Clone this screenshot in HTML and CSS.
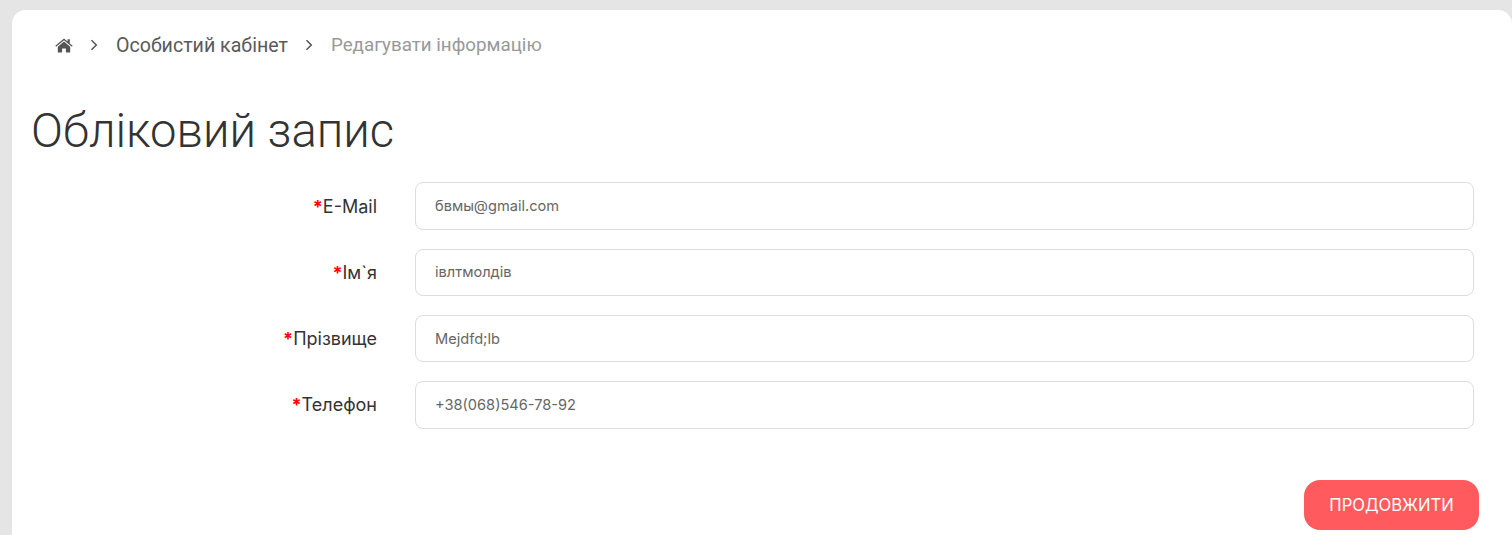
FILE: index.html
```html
<!DOCTYPE html>
<html>
<head>
	<meta charset=utf-8>
	<title>Обліковий запис</title>
	<link rel="stylesheet" href="styles.css">
</head>
<body>
<main class=card>
	<nav class=breadcrumb>
		<a class=home>
			<svg width=18 height=15 viewBox="0 0 18 15"><path fill="#555" d="M9 .6 .3 7.8l.8 1L9 2.3l7.9 6.5.8-1-2.9-2.4V1.2h-2.2v2.4zM9 3.6 2.8 8.7V14c0 .4.3.6.6.6h3.7v-4h3.8v4h3.7c.3 0 .6-.2.6-.6V8.7z"/></svg>
		</a>
		<svg class=sep width=8 height=12 viewBox="0 0 8 12"><path fill=none stroke="#555" stroke-width=1.5 d="M1.5 1.2 6.3 6l-4.8 4.8"/></svg>
		<a class=parent>Особистий кабінет</a>
		<svg class=sep width=8 height=12 viewBox="0 0 8 12"><path fill=none stroke="#555" stroke-width=1.5 d="M1.5 1.2 6.3 6l-4.8 4.8"/></svg>
		<a class=current>Редагувати інформацію</a>
	</nav>
	<h1>Обліковий запис</h1>
	<form class=fields onsubmit="return false;">
		<label class=row>
			<span class=name><b>*</b>E-Mail</span>
			<input value="бвмы@gmail.com">
		</label>
		<label class=row>
			<span class=name><b>*</b>Ім`я</span>
			<input value="івлтмолдів">
		</label>
		<label class=row>
			<span class=name><b>*</b>Прізвище</span>
			<input value="Mejdfd;lb">
		</label>
		<label class=row>
			<span class=name><b>*</b>Телефон</span>
			<input value="+38(068)546-78-92">
		</label>
		<div class=actions>
			<button type=submit>ПРОДОВЖИТИ</button>
		</div>
	</form>
</main>
</body>
</html>
```

FILE: styles.css
```css
* {
	margin: 0;
	padding: 0;
	box-sizing: border-box;
}
html, body {
	height: 535px;
	overflow: hidden;
}
body {
	background: #e5e5e5;
	padding: 10px 0 0 12px;
	font-family: Inter, "Noto Sans", sans-serif;
	color: #333;
}
.card {
	height: 525px;
	background: #fff;
	border-radius: 14px 14px 0 0;
	padding: 0 38px 0 19px;
}
.breadcrumb {
	display: flex;
	align-items: center;
	height: 70px;
	padding: 0 0 0 24px;
	font-family: Roboto, sans-serif;
	font-size: 19.6px;
	color: #5a5a5a;
}
.breadcrumb .home {
	display: flex;
}
.breadcrumb .sep {
	margin: 0 18px 0 17px;
}
.breadcrumb .current {
	font-size: 18.8px;
	color: #999;
}
h1 {
	font-family: Roboto, sans-serif;
	font-weight: 300;
	font-size: 47.2px;
	line-height: 56px;
	margin-top: 23px;
	color: #333;
}
.fields {
	margin-top: 23.4px;
}
.row {
	display: flex;
	align-items: center;
	margin-bottom: 18.75px;
}
.name {
	width: 346px;
	text-align: right;
	font-size: 18px;
	font-weight: 400;
	color: #333;
	margin-right: 38px;
}
.name b {
	color: #f00;
}
input {
	flex: 1;
	height: 47.5px;
	padding: 0 19px;
	border: 1px solid #ddd;
	border-radius: 8px;
	font-family: Inter, "Noto Sans", sans-serif;
	font-size: 14.6px;
	color: #666;
	background: #fff;
}
.actions {
	display: flex;
	justify-content: flex-end;
	margin: 51.4px -5px 0 0;
}
button {
	width: 175px;
	height: 50px;
	border: 0;
	border-radius: 16px;
	background: #ff5b5e;
	color: #fff;
	font-family: Inter, "Noto Sans", sans-serif;
	font-size: 16.6px;
}
```
